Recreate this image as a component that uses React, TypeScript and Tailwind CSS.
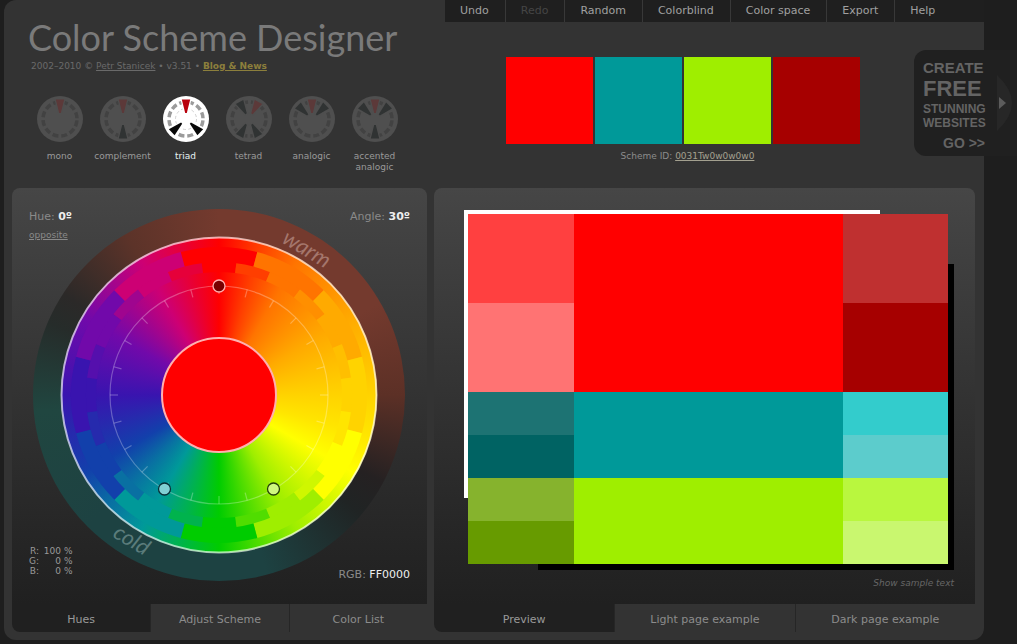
import React from 'react';

const menuItems = [
  { label: 'Undo' },
  { label: 'Redo', disabled: true },
  { label: 'Random' },
  { label: 'Colorblind' },
  { label: 'Color space' },
  { label: 'Export' },
  { label: 'Help' },
];

const schemes = [
  { name: 'mono', main: 0, others: [] },
  { name: 'complement', main: 0, others: [180] },
  { name: 'triad', main: 0, others: [133, 227], active: true },
  { name: 'tetrad', main: 29, others: [-29, 151, 209] },
  { name: 'analogic', main: 0, others: [-46, 46] },
  { name: 'accented analogic', main: 0, others: [-46, 46, 180] },
];

// 24 hues of the artistic wheel, 15 degrees apart, clockwise from red
const hues = [
  '#ff0000', '#ff3e00', '#ff7400', '#ff8f00', '#ffaa00', '#ffbf00',
  '#ffd300', '#ffe500', '#ffff00', '#cff700', '#9fee00', '#50dd00',
  '#00cc00', '#00b34d', '#009999', '#0970a2', '#1240ab', '#262aad',
  '#3914af', '#550fad', '#7109aa', '#9f058f', '#cd0074', '#e6003a',
];

const polar = (r: number, deg: number) => {
  const a = (deg * Math.PI) / 180;
  return `${(r * Math.sin(a)).toFixed(2)} ${(-r * Math.cos(a)).toFixed(2)}`;
};

const ringSector = (r1: number, r2: number, from: number, to: number) =>
  `M${polar(r2, from)}A${r2} ${r2} 0 0 1 ${polar(r2, to)}L${polar(r1, to)}A${r1} ${r1} 0 0 0 ${polar(r1, from)}Z`;

const SchemeIcon = ({ main, others, active }: { main: number, others: number[], active?: boolean }) => (
  <svg viewBox="-23 -23 46 46" className="size-[46px]" aria-hidden="true">
    <circle r="23" fill={active ? '#ffffff' : '#4f4f4f'} />
    <circle
      r="17"
      fill="none"
      stroke={active ? '#9b9b9b' : '#424242'}
      strokeWidth="3.5"
      strokeDasharray="5.9 3"
      strokeDashoffset="-1.5"
    />
    {active && <circle r="10.5" fill="none" stroke="#c4c4c4" strokeWidth="0.8" strokeDasharray="3 2.5" />}
    {[main, ...others].map((angle) => (
      <g key={angle} transform={`rotate(${angle})`}>
        <path d="M-5.500 -20H5.500L2 -5H-2Z" fill={active ? '#ffffff' : '#4f4f4f'} />
        <path
          d="M-4.200 -19.500H4.200L0.800 -6H-0.800Z"
          fill={angle === main ? (active ? '#b8000c' : '#5c3939') : active ? '#080808' : '#303333'}
        />
      </g>
    ))}
  </svg>
);

const ColorWheel = () => (
  <div className="grid size-[372px] place-items-center rounded-full bg-[conic-gradient(#743a2e_0deg,#743a2e_60deg,#5c3026_90deg,#252122_118deg,#202424_130deg,#1d4242_165deg,#1d4242_225deg,#204640_265deg,#262c2a_293deg,#2b2928_303deg,#5c3329_330deg,#743a2e_360deg)]">
    <div className="col-start-1 row-start-1 size-[316px] rounded-full bg-[conic-gradient(#ff0000,#ff3e00,#ff7400,#ff8f00,#ffaa00,#ffbf00,#ffd300,#ffe500,#ffff00,#cff700,#9fee00,#50dd00,#00cc00,#00b34d,#009999,#0970a2,#1240ab,#262aad,#3914af,#550fad,#7109aa,#9f058f,#cd0074,#e6003a,#ff0000)]" />
    <svg viewBox="-186 -186 372 372" className="col-start-1 row-start-1 size-[372px]" role="img" aria-label="Hue wheel">
      {hues.map((color, i) => (
        <path key={color} d={ringSector(123, 134, i * 15 - 7.5, i * 15 + 7.5)} fill={color} />
      ))}
      {hues.map((color, i) =>
        i % 2 === 0 ? <path key={color} d={ringSector(133, 148, i * 15 - 15, i * 15 + 15)} fill={color} /> : null
      )}
      <circle r="157.500" fill="none" stroke="#ffffff" strokeOpacity="0.65" strokeWidth="2" />
      <g fill="none" stroke="#ffffff" strokeOpacity="0.28" strokeWidth="1.2">
        <circle r="109" />
        {hues.map((color, i) => (
          <path key={color} d={`M${polar(109, i * 15)}L${polar(101, i * 15)}`} />
        ))}
      </g>
      <circle r="57" fill="#ff0000" stroke="#ffb0b0" strokeWidth="2" />
      <circle cx="0" cy="-109" r="6" fill="#7a0000" stroke="#ffb0b0" strokeWidth="1.3" />
      <circle cx="54.500" cy="94" r="6" fill="#cff77f" stroke="#26400a" strokeWidth="1.3" />
      <circle cx="-54.500" cy="94" r="6" fill="#80d0d4" stroke="#0a3038" strokeWidth="1.3" />
      <g className="font-['Lato',sans-serif] text-[22px] italic" textAnchor="middle">
        <text transform="rotate(31)" y="-163" fill="#a4766c">warm</text>
        <text transform="translate(-88 146) rotate(31)" y="6" fill="#5b7c7b">cold</text>
      </g>
    </svg>
  </div>
);

const Tabs = ({ items, label }: { items: string[], label: string }) => (
  <div role="tablist" aria-label={label} className="grid h-7 grid-cols-3 text-[11px] text-[#8c8c8c]">
    {items.map((item, i) => (
      <button
        key={item}
        role="tab"
        aria-selected={i === 0}
        className={
          i === 0
            ? 'rounded-bl-lg bg-[#202020] pt-1 text-[#9a9a9a]'
            : 'border-l border-[#262626] bg-[#333333] pt-1'
        }
      >
        {item}
      </button>
    ))}
  </div>
);

const Header = () => (
  <header className="flex h-[188px]">
    <div className="w-[441px] shrink-0 pl-6">
      <h1 className="pt-3.5 font-['Lato',sans-serif] text-[36px] leading-[46px] whitespace-nowrap text-[#7a7a7a]">
        Color Scheme Designer
      </h1>
      <p className="pl-[3px] text-[9px] leading-3 text-[#6a6a6a]">
        2002–2010 © <a href="#author" className="underline">Petr Stanicek</a> • v3.51 •{' '}
        <a href="#blog" className="font-bold text-[#8c7f3c] underline">Blog &amp; News</a>
      </p>
      <div className="mt-6 flex">
        {schemes.map((s) => (
          <button
            key={s.name}
            aria-pressed={!!s.active}
            className={`flex w-[63px] flex-col items-center text-[9px] leading-[11px] ${s.active ? 'text-[#e6f2f2]' : 'text-[#9a9a9a]'}`}
          >
            <SchemeIcon main={s.main} others={s.others} active={s.active} />
            <span className="mt-[9px]">{s.name}</span>
          </button>
        ))}
      </div>
    </div>
    <div className="min-w-0 flex-1">
      <nav className="flex h-[22px] bg-[#1f1f1f] text-[11px]">
        {menuItems.map((m) => (
          <button
            key={m.label}
            disabled={m.disabled}
            className="border-r border-[#383838] pr-4 pl-[15px] text-[#a0a0a0] last:border-r-0 disabled:text-[#454545]"
          >
            {m.label}
          </button>
        ))}
      </nav>
      <div className="mt-[35px] flex justify-center gap-0.5 pr-16">
        <div className="size-[87px] bg-[#ff0000]" />
        <div className="size-[87px] bg-[#009999]" />
        <div className="size-[87px] bg-[#9fee00]" />
        <div className="size-[87px] bg-[#a60000]" />
      </div>
      <p className="mt-1.5 pr-[54px] text-center text-[9px] leading-3 text-[#8c8c8c]">
        Scheme ID: <a href="#scheme" className="text-[#a3a08f] underline">0031Tw0w0w0w0</a>
      </p>
    </div>
  </header>
);

const HuePanel = () => (
  <section className="w-[415px] shrink-0">
    <div className="grid rounded-t-lg bg-linear-to-b from-[#464646] to-[#202020] px-[17px] pt-[21px] pb-[23px] text-[11px] leading-4 text-[#8a8a8a]">
      <div className="col-start-1 row-start-1 justify-self-center pr-0.5">
        <ColorWheel />
      </div>
      <div className="col-start-1 row-start-1 self-start justify-self-start">
        <p>Hue: <b className="text-[#eeeeee]">0º</b></p>
        <button className="mt-1 block text-[9px] leading-3 underline">opposite</button>
      </div>
      <p className="col-start-1 row-start-1 self-start justify-self-end">
        Angle: <b className="text-[#eeeeee]">30º</b>
      </p>
      <table className="col-start-1 row-start-1 mb-[5px] self-end justify-self-start text-right text-[9px] leading-[10px] text-[#999999]">
        <tbody>
          <tr><th className="font-normal">R:</th><td className="w-[22px]">100</td><td className="pl-[3px]">%</td></tr>
          <tr><th className="font-normal">G:</th><td>0</td><td>%</td></tr>
          <tr><th className="font-normal">B:</th><td>0</td><td>%</td></tr>
        </tbody>
      </table>
      <p className="col-start-1 row-start-1 self-end justify-self-end leading-3">
        RGB: <span className="text-[#eeeeee]">FF0000</span>
      </p>
    </div>
    <Tabs label="Scheme settings" items={['Hues', 'Adjust Scheme', 'Color List']} />
  </section>
);

const PreviewPanel = () => (
  <section className="min-w-0 flex-1">
    <div className="rounded-t-lg bg-linear-to-b from-[#464646] to-[#202020] pt-[26px] pr-[21px] pb-[15px] pl-[34px]">
      <div className="relative isolate mr-1.5 grid h-[350px] grid-cols-[106fr_269fr_105fr] grid-rows-[89fr_89fr_43fr_43fr_43fr_43fr]">
        <div className="absolute -top-1 -left-1 -z-10 h-72 w-[calc(100%-64px)] bg-white" />
        <div className="absolute -right-1.5 -bottom-1.5 -z-10 h-[306px] w-[calc(100%-64px)] bg-black" />
        <div className="bg-[#ff4040]" />
        <div className="row-span-2 bg-[#ff0000]" />
        <div className="bg-[#bf3030]" />
        <div className="bg-[#ff7373]" />
        <div className="bg-[#a60000]" />
        <div className="bg-[#1d7373]" />
        <div className="row-span-2 bg-[#009999]" />
        <div className="bg-[#33cccc]" />
        <div className="bg-[#006363]" />
        <div className="bg-[#5ccccc]" />
        <div className="bg-[#86b32d]" />
        <div className="row-span-2 bg-[#9fee00]" />
        <div className="bg-[#b9f73e]" />
        <div className="bg-[#679b00]" />
        <div className="bg-[#c9f76f]" />
      </div>
      <button className="mt-[13px] ml-auto block text-[9px] leading-3 text-[#666666] italic">Show sample text</button>
    </div>
    <Tabs label="Preview mode" items={['Preview', 'Light page example', 'Dark page example']} />
  </section>
);

const AdBadge = () => (
  <a
    href="#create"
    className="absolute top-[50px] right-0 flex items-center rounded-l-xl bg-[#202020] font-['Liberation_Sans',sans-serif] font-bold text-[#646464]"
  >
    <span className="flex h-[106px] w-[76px] flex-col pt-2.5 pl-[9px] text-[12px] leading-[14px] whitespace-nowrap">
      <span className="text-[15px] leading-4">CREATE</span>
      <span className="text-[22px] leading-[26px]">FREE</span>
      <span>STUNNING</span>
      <span>WEBSITES</span>
      <span className="mt-1.5 pl-5 text-[14px]">GO &gt;&gt;</span>
    </span>
    <svg viewBox="0 0 27 56" className="h-14 w-[27px]" aria-hidden="true">
      <path d="M7 0Q22 14 22 28T7 56Z" fill="#272727" />
      <path d="M9 22L16 28L9 34Z" fill="#5c5c5c" />
    </svg>
  </a>
);

const App: React.FC = () => {
  return (
    <div className="relative min-h-screen bg-[#1e1e1e] pr-[33px] pl-1 font-['DejaVu_Sans',sans-serif]">
      <main className="rounded-tl-xl rounded-b-xl bg-[#333333] pb-2">
        <Header />
        <div className="flex gap-[7px] pr-[9px] pl-2">
          <HuePanel />
          <PreviewPanel />
        </div>
      </main>
      <AdBadge />
    </div>
  );
};

export default App;
